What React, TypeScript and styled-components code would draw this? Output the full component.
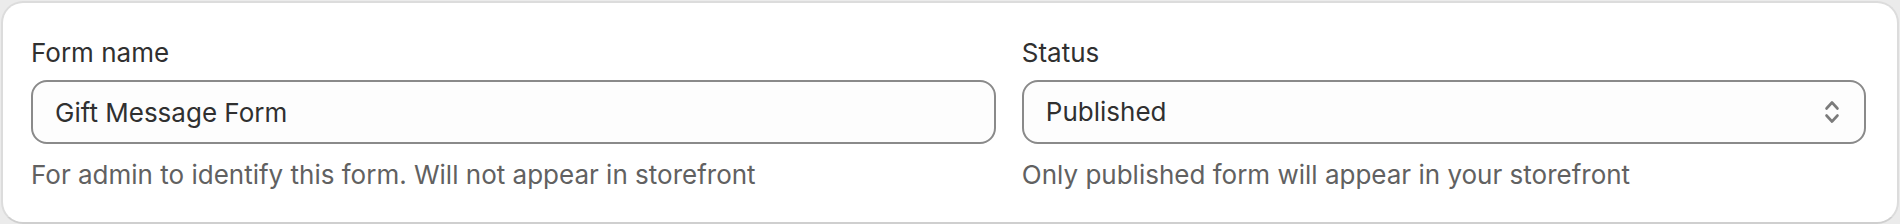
import styled, { createGlobalStyle } from "styled-components";

const GlobalStyle = createGlobalStyle`
    * { box-sizing: border-box; }
    body {
        margin: 0;
        background: #ebebeb;
        font-family: Inter, "Noto Sans", sans-serif;
        -webkit-font-smoothing: antialiased;
    }
`;

const Page = styled.div`
    padding: 1px;
`;

const Card = styled.section`
    background: #ffffff;
    border: 2px solid #dcdcdc;
    border-bottom-color: #cfcfcf;
    border-radius: 22px;
    padding: 30px 31px 27px 28px;
    display: grid;
    grid-template-columns: 8fr 7fr;
    column-gap: 26px;
`;

const Field = styled.div`
    display: flex;
    flex-direction: column;
    min-width: 0;
`;

const Label = styled.label`
    font-size: 26px;
    line-height: 40px;
    color: #303030;
    margin-bottom: 7px;
`;

const Control = styled.div`
    position: relative;
    height: 64px;
`;

const inputBase = `
    width: 100%;
    height: 64px;
    border: 2px solid #8a8a8a;
    border-radius: 16px;
    background: #fdfdfd;
    padding: 0 22px;
    font-family: Inter, "Noto Sans", sans-serif;
    font-size: 26px;
    line-height: 40px;
    color: #303030;
    outline: none;
`;

const TextInput = styled.input`
    ${inputBase}
`;

const Select = styled.select`
    ${inputBase}
    appearance: none;
    -webkit-appearance: none;
    padding-right: 60px;
`;

const Chevron = styled.svg`
    position: absolute;
    right: 26px;
    top: 50%;
    transform: translateY(-50%);
    pointer-events: none;
`;

const Help = styled.p`
    margin: 11px 0 0;
    font-size: 26px;
    line-height: 40px;
    color: #616161;
`;

export default function App() {
    return (
        <>
            <GlobalStyle />
            <Page>
                <Card>
                    <Field>
                        <Label htmlFor="form-name">Form name</Label>
                        <Control>
                            <TextInput id="form-name" defaultValue="Gift Message Form" />
                        </Control>
                        <Help>For admin to identify this form. Will not appear in storefront</Help>
                    </Field>
                    <Field>
                        <Label htmlFor="status">Status</Label>
                        <Control>
                            <Select id="status" defaultValue="published">
                                <option value="published">Published</option>
                                <option value="draft">Draft</option>
                            </Select>
                            <Chevron width="16" height="26" viewBox="0 0 16 26" fill="none">
                                <path d="M2.5 9.5 8 3.5l5.5 6" stroke="#7b7b7b" strokeWidth="2.6" strokeLinecap="round" strokeLinejoin="round" />
                                <path d="M2.5 16.5 8 22.5l5.5-6" stroke="#7b7b7b" strokeWidth="2.6" strokeLinecap="round" strokeLinejoin="round" />
                            </Chevron>
                        </Control>
                        <Help>Only published form will appear in your storefront</Help>
                    </Field>
                </Card>
            </Page>
        </>
    );
}
